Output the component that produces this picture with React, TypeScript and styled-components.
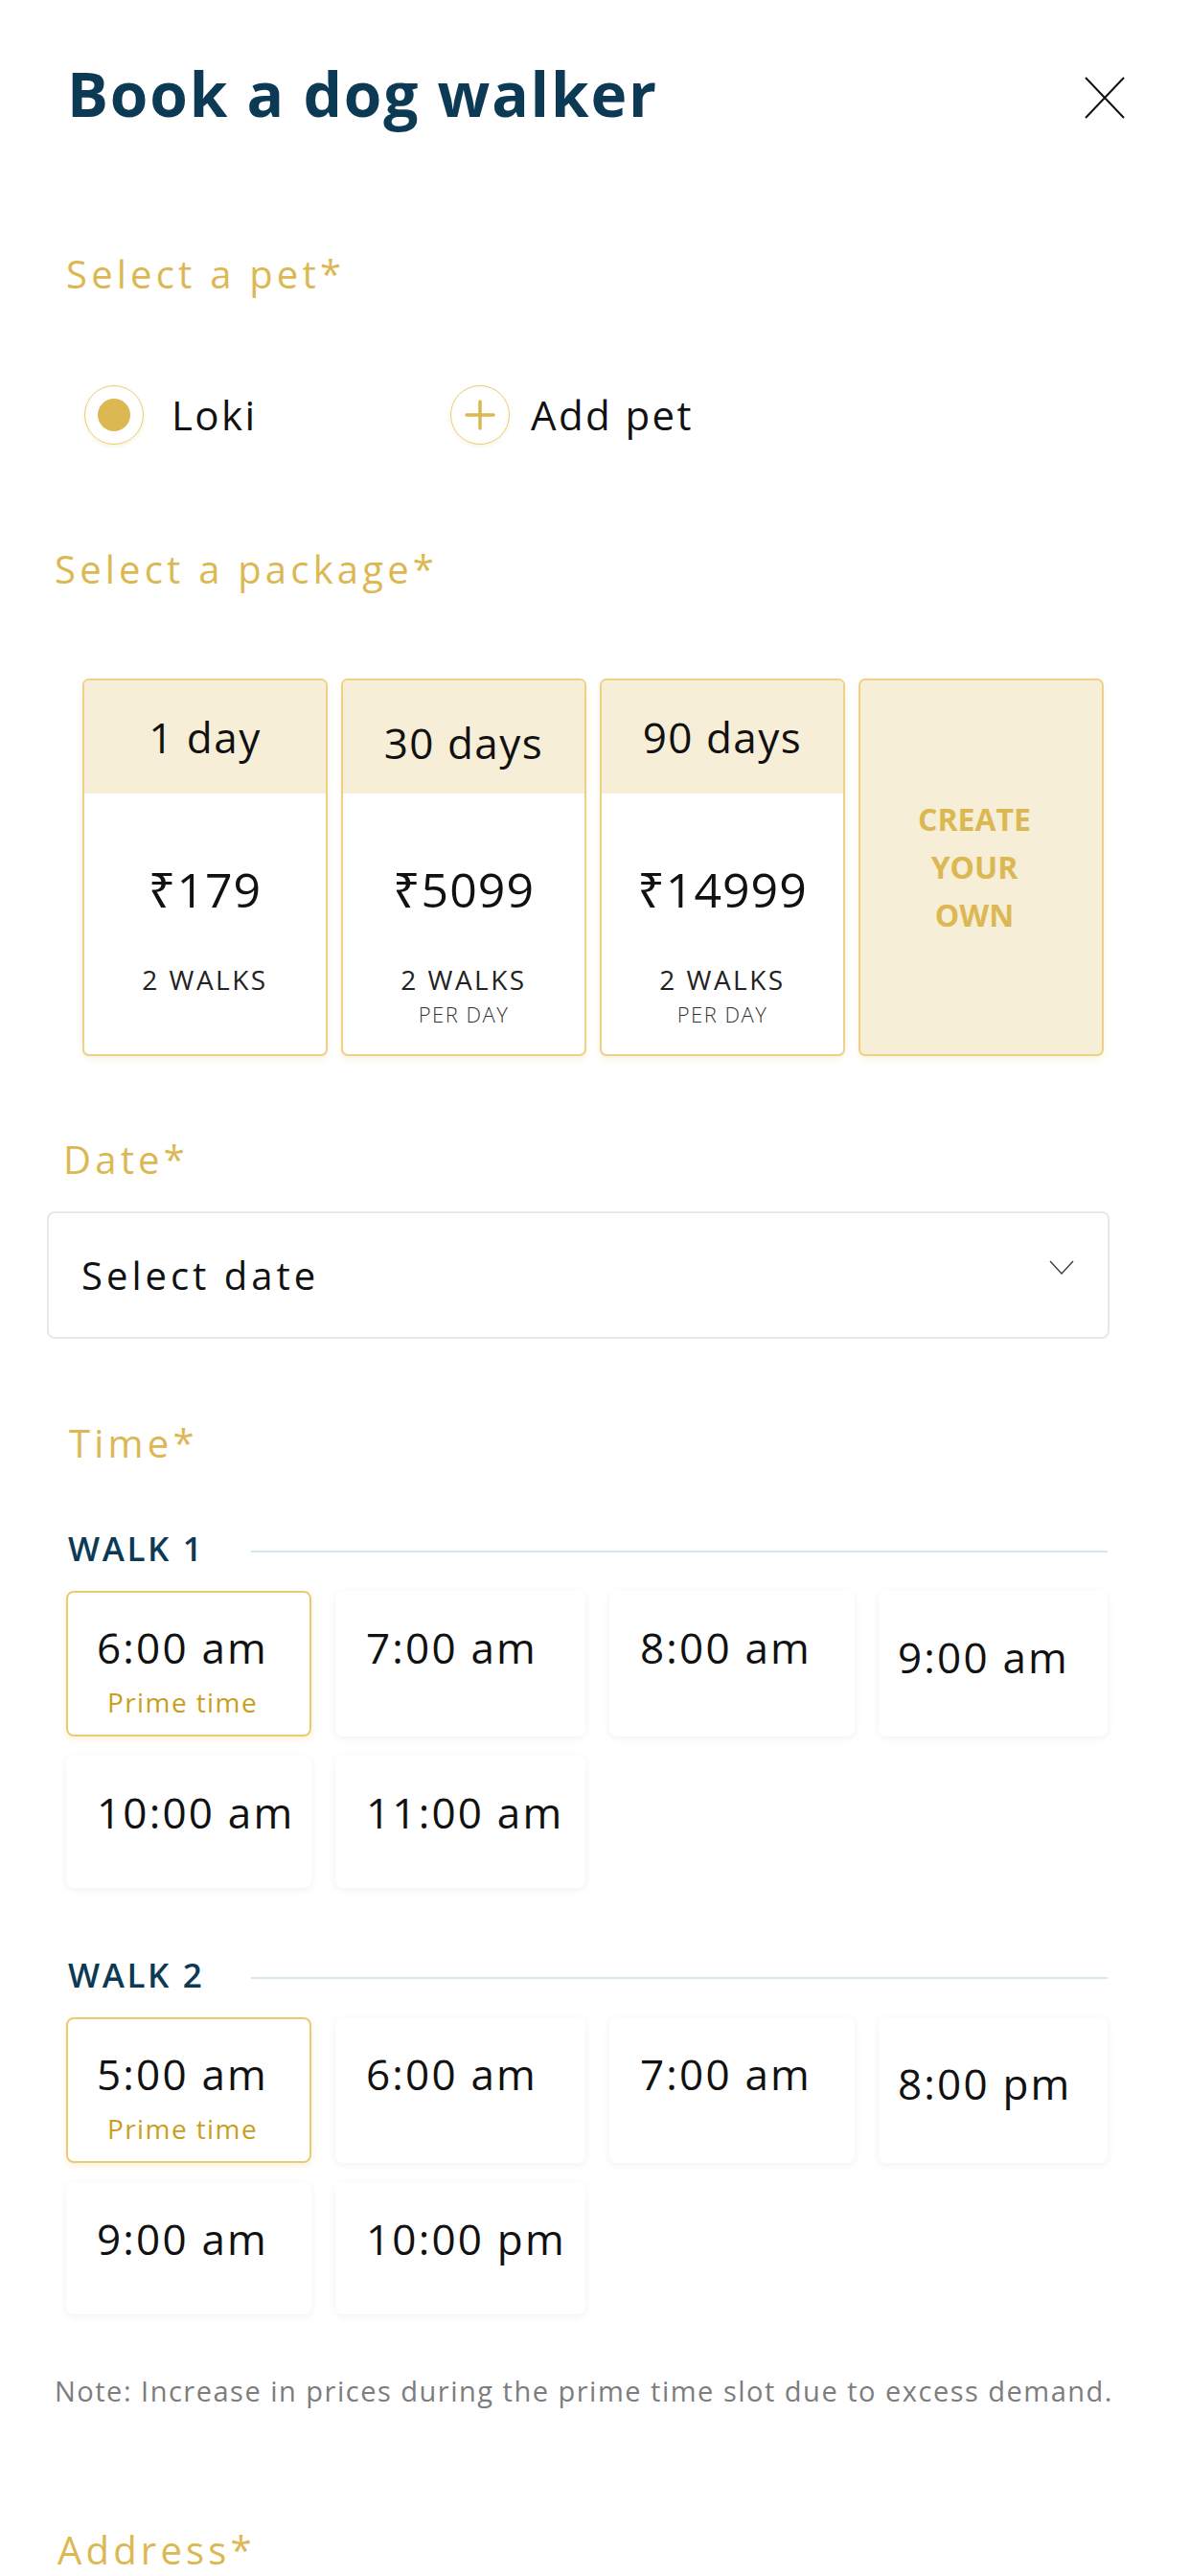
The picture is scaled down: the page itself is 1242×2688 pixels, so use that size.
import React from "react";
import styled, { createGlobalStyle, css } from "styled-components";

const gold = "#dcb852";
const cream = "#f7eed7";
const navy = "#0c3a54";

const GlobalStyle = createGlobalStyle`
  html, body {
    margin: 0;
    padding: 0;
    background: #fff;
  }
  body {
    font-family: "Open Sans", "Noto Sans", sans-serif;
    color: #111;
  }
`;

const Page = styled.div`
  width: 1242px;
  height: 2688px;
  box-sizing: border-box;
  padding-top: 66px;
  overflow: hidden;
`;

const Header = styled.header`
  display: flex;
  justify-content: space-between;
  align-items: flex-start;
  padding: 0 68px 0 70px;
`;

const Title = styled.h1`
  margin: 0;
  font-size: 64px;
  line-height: 1;
  font-weight: 700;
  color: ${navy};
  letter-spacing: 1.8px;
`;

const CloseButton = styled.button`
  border: 0;
  background: none;
  padding: 0;
  margin-top: 14px;
  width: 42px;
  height: 44px;
  cursor: pointer;

  svg {
    display: block;
  }
`;

const Label = styled.h2<{ $indent: number; $top: number }>`
  margin: ${(p) => p.$top}px 0 0 ${(p) => p.$indent}px;
  font-size: 40px;
  line-height: 1;
  font-weight: 400;
  color: ${gold};
  letter-spacing: 4.2px;
`;

const PetRow = styled.div`
  display: grid;
  grid-template-columns: 382px auto;
  align-items: center;
  height: 62px;
  margin: 96px 0 0 88px;
`;

const PetOption = styled.label`
  display: flex;
  align-items: center;
  font-size: 42px;
  line-height: 1;
  letter-spacing: 2.4px;
  color: #111;
  cursor: pointer;
`;

const Radio = styled.span`
  width: 62px;
  height: 62px;
  box-sizing: border-box;
  border-radius: 50%;
  border: 1.5px solid #eccb6e;
  box-shadow: 0 2px 4px rgba(220, 184, 82, 0.18);
  display: flex;
  align-items: center;
  justify-content: center;
  margin-right: 29px;

  &::after {
    content: "";
    width: 34px;
    height: 34px;
    border-radius: 50%;
    background: ${gold};
  }
`;

const AddCircle = styled(Radio)`
  margin-right: 22px;

  &::after {
    display: none;
  }
`;

const PackageGrid = styled.div`
  display: grid;
  grid-template-columns: repeat(4, 256px);
  column-gap: 14px;
  height: 394px;
  margin: 94px 0 0 86px;
`;

const PackageCard = styled.div<{ $custom?: boolean }>`
  box-sizing: border-box;
  border: 2px solid #ecd187;
  border-radius: 7px;
  background: ${(p) => (p.$custom ? cream : "#fff")};
  box-shadow: 0 3px 6px rgba(236, 209, 135, 0.25);
  overflow: hidden;
  display: flex;
  flex-direction: column;

  ${(p) =>
    p.$custom &&
    css`
      align-items: center;
      justify-content: center;
    `}
`;

const CardHead = styled.div<{ $shift?: number }>`
  height: 118px;
  box-sizing: border-box;
  padding-top: ${(p) => p.$shift ?? 0}px;
  background: ${cream};
  display: flex;
  align-items: center;
  justify-content: center;
  font-size: 44px;
  line-height: 1;
  letter-spacing: 1.5px;
`;

const CardBody = styled.div`
  display: flex;
  flex-direction: column;
  align-items: center;
  padding-top: 75px;
`;

const Price = styled.div`
  font-size: 50px;
  line-height: 1;
  letter-spacing: 1px;
  margin-bottom: 55px;
`;

const Walks = styled.div`
  font-size: 28px;
  line-height: 1;
  letter-spacing: 2.5px;
  color: #222;
`;

const PerDay = styled.div`
  font-size: 22px;
  line-height: 1;
  font-weight: 300;
  letter-spacing: 1.5px;
  color: #333;
  margin-top: 11px;
`;

const CreateText = styled.div`
  font-size: 32px;
  line-height: 50px;
  font-weight: 700;
  color: ${gold};
  text-align: center;
  margin-right: 14px;
`;

const DateSelect = styled.div`
  box-sizing: border-box;
  width: 1109px;
  height: 133px;
  margin: 34px 0 0 49px;
  padding: 0 35px 0 34px;
  border: 2px solid #e8e8e8;
  border-radius: 8px;
  display: flex;
  align-items: center;
  justify-content: space-between;
  font-size: 40px;
  line-height: 1;
  letter-spacing: 4px;
  color: #111;

  svg {
    margin-bottom: 16px;
  }
`;

const WalkHeader = styled.div<{ $top: number }>`
  display: grid;
  grid-template-columns: 191px 1fr;
  width: 1085px;
  margin: ${(p) => p.$top}px 0 0 71px;
`;

const WalkTitle = styled.h3`
  margin: 0;
  font-size: 35px;
  line-height: 1;
  font-weight: 600;
  letter-spacing: 2.6px;
  color: ${navy};
`;

const Rule = styled.div`
  height: 2px;
  margin-top: 20px;
  background: #d3e9ed;
`;

const SlotGrid = styled.div`
  display: grid;
  grid-template-columns: 256px 261px 256px 239px;
  column-gap: 25px;
  row-gap: 20px;
  margin: 27px 0 0 69px;
`;

const Slot = styled.div<{ $selected?: boolean }>`
  box-sizing: border-box;
  min-height: 138px;
  padding: 35px 0 20px 30px;
  border-radius: 8px;
  background: #fff;
  border: 2px solid ${(p) => (p.$selected ? "#ebcb72" : "transparent")};
  box-shadow: ${(p) =>
    p.$selected
      ? "0 3px 6px rgba(235, 203, 114, 0.25)"
      : "0 2px 8px rgba(0, 0, 0, 0.06)"};
  cursor: pointer;

  &:nth-child(4) {
    padding: 45px 0 0 18px;
  }
`;

const SlotInner = styled.div`
  display: inline-flex;
  flex-direction: column;
  align-items: center;
`;

const SlotTime = styled.span`
  font-size: 44px;
  line-height: 1;
  letter-spacing: 2.2px;
  color: #111;
`;

const Prime = styled.span`
  margin-top: 21px;
  font-size: 28px;
  line-height: 1;
  letter-spacing: 1.4px;
  color: #c99f1e;
`;

const Note = styled.p`
  margin: 65px 0 0 57px;
  font-size: 29px;
  line-height: 1;
  letter-spacing: 1.5px;
  color: #7d7d7d;
  white-space: nowrap;
`;

type Package = { days: string; price: string; perDay: boolean; shift?: number };

const packages: Package[] = [
  { days: "1 day", price: "₹179", perDay: false },
  { days: "30 days", price: "₹5099", perDay: true, shift: 12 },
  { days: "90 days", price: "₹14999", perDay: true, shift: -4 },
];

type Walk = { name: string; top: number; slots: string[] };

const walks: Walk[] = [
  {
    name: "WALK 1",
    top: 72,
    slots: ["6:00 am", "7:00 am", "8:00 am", "9:00 am", "10:00 am", "11:00 am"],
  },
  {
    name: "WALK 2",
    top: 73,
    slots: ["5:00 am", "6:00 am", "7:00 am", "8:00 pm", "9:00 am", "10:00 pm"],
  },
];

const CloseIcon = () => (
  <svg width="42" height="44" viewBox="0 0 42 44">
    <path d="M1 1 L41 43 M41 1 L1 43" stroke="#111" strokeWidth="2" fill="none" />
  </svg>
);

const PlusIcon = () => (
  <svg width="32" height="32" viewBox="0 0 32 32">
    <path d="M16 2 V30 M2 16 H30" stroke={gold} strokeWidth="3.5" strokeLinecap="round" />
  </svg>
);

const Chevron = () => (
  <svg width="26" height="15" viewBox="0 0 26 15">
    <polyline points="1,1 13,14 25,1" stroke="#444" strokeWidth="1.5" fill="none" />
  </svg>
);

const App = () => {
  return (
    <Page>
      <GlobalStyle />
      <Header>
        <Title>Book a dog walker</Title>
        <CloseButton aria-label="Close">
          <CloseIcon />
        </CloseButton>
      </Header>

      <Label $indent={69} $top={136}>Select a pet*</Label>
      <PetRow>
        <PetOption>
          <Radio />
          Loki
        </PetOption>
        <PetOption>
          <AddCircle>
            <PlusIcon />
          </AddCircle>
          Add pet
        </PetOption>
      </PetRow>

      <Label $indent={57} $top={110}>Select a package*</Label>
      <PackageGrid>
        {packages.map((pkg) => (
          <PackageCard key={pkg.days}>
            <CardHead $shift={pkg.shift}>{pkg.days}</CardHead>
            <CardBody>
              <Price>{pkg.price}</Price>
              <Walks>2 WALKS</Walks>
              {pkg.perDay && <PerDay>PER DAY</PerDay>}
            </CardBody>
          </PackageCard>
        ))}
        <PackageCard $custom>
          <CreateText>
            CREATE
            <br />
            YOUR
            <br />
            OWN
          </CreateText>
        </PackageCard>
      </PackageGrid>

      <Label $indent={66} $top={88}>Date*</Label>
      <DateSelect>
        Select date
        <Chevron />
      </DateSelect>

      <Label $indent={72} $top={89}>Time*</Label>
      {walks.map((walk) => (
        <React.Fragment key={walk.name}>
          <WalkHeader $top={walk.top}>
            <WalkTitle>{walk.name}</WalkTitle>
            <Rule />
          </WalkHeader>
          <SlotGrid>
            {walk.slots.map((time, i) => (
              <Slot key={time} $selected={i === 0}>
                <SlotInner>
                  <SlotTime>{time}</SlotTime>
                  {i === 0 && <Prime>Prime time</Prime>}
                </SlotInner>
              </Slot>
            ))}
          </SlotGrid>
        </React.Fragment>
      ))}

      <Note>Note: Increase in prices during the prime time slot due to excess demand.</Note>

      <Label $indent={60} $top={132}>Address*</Label>
    </Page>
  );
};

export default App;
